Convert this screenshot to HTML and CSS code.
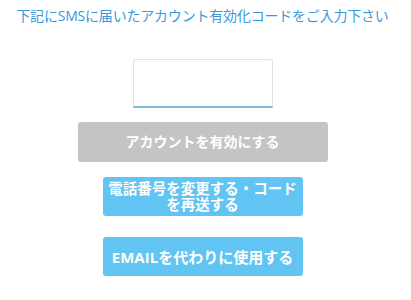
FILE: index.html
```html
<!DOCTYPE html>
<html lang="ja">
<head>
  <meta charset="UTF-8" />
  <meta name="viewport" content="width=device-width, initial-scale=1.0"/>
  <title>アカウント有効化</title>
  <link rel="stylesheet" href="styles.css">
</head>
<body>

  <div class="verify">
    <p class="lead">下記にSMSに届いたアカウント有効化コードをご入力下さい</p>

    <input class="code-input" type="text" maxlength="6">

    <button class="btn btn-disabled" disabled>アカウントを有効にする</button>
    <button class="btn btn-blue btn-phone">電話番号を変更する・コード<br>を再送する</button>
    <button class="btn btn-blue btn-email">EMAILを代わりに使用する</button>
  </div>

</body>
</html>
```

FILE: styles.css
```css
* {
  margin: 0;
  padding: 0;
  box-sizing: border-box;
}

body {
  background-color: #ffffff;
  font-family: "Open Sans", "Noto Sans CJK JP", sans-serif;
  color: #333333;
}

.verify {
  display: flex;
  flex-direction: column;
  align-items: center;
  padding-top: 6px;
  padding-right: 6px;
}

.lead {
  color: #3a9ad9;
  font-size: 14px;
  line-height: 20px;
  text-align: center;
  letter-spacing: -0.2px;
}

.code-input {
  width: 140px;
  height: 49px;
  margin-top: 33px;
  border: 1px solid #e3e3e3;
  border-bottom: 2px solid #7cc0d8;
  border-radius: 3px 3px 0 0;
  outline: none;
  font-size: 18px;
  text-align: center;
}

.btn {
  border: none;
  border-radius: 3px;
  color: #ffffff;
  font-family: "Open Sans", "Noto Sans CJK JP", sans-serif;
  font-weight: 700;
  font-size: 14px;
  line-height: 16px;
}

.btn-disabled {
  width: 250px;
  height: 40px;
  margin-top: 14px;
  background-color: #c4c4c4;
}

.btn-blue {
  width: 200px;
  height: 39px;
  background-color: #62c4f2;
}

.btn-phone {
  margin-top: 15px;
  font-size: 14.5px;
  line-height: 16px;
}

.btn-email {
  margin-top: 21px;
  font-size: 15px;
}
```
